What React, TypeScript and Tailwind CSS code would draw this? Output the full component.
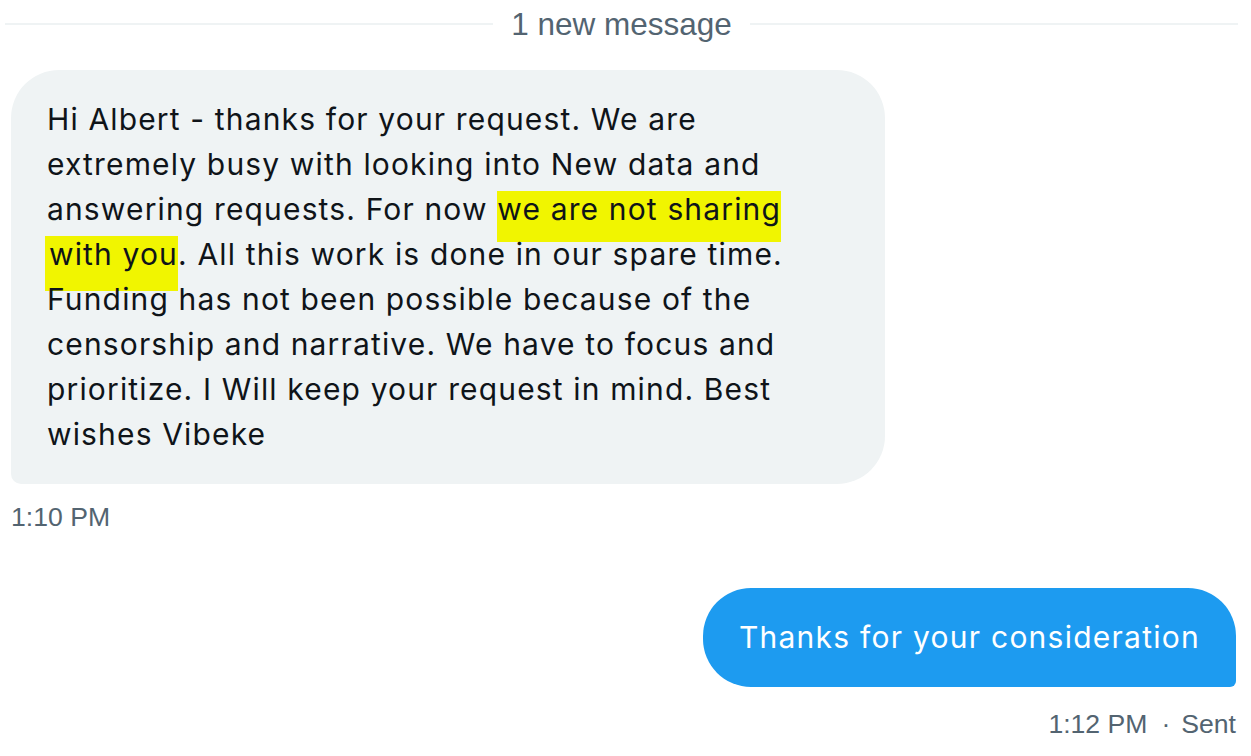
export default function App() {
  return (
    <div className="min-h-screen bg-white pl-[11px] pr-[15px]">
      {/* new-message divider */}
      <div className="flex h-[50px] items-center -ml-[6px] -mr-[2px]">
        <div className="h-[2px] flex-1 bg-[#eff3f4] -mt-[2px]" />
        <span className="px-[18px] text-[31.5px] leading-none text-[#536471] font-['Liberation_Sans',Arial,sans-serif]">
          1 new message
        </span>
        <div className="h-[2px] flex-1 bg-[#eff3f4] -mt-[2px]" />
      </div>

      {/* received */}
      <div className="mt-[20px] flex flex-col items-start">
        <div className="w-[874px] rounded-[48px] rounded-bl-[10px] bg-[#eff3f4] px-[36px] py-[27px] text-[30px] leading-[45px] tracking-[1.15px] text-[#0f1419] font-['Inter','Noto_Sans',sans-serif]">
          Hi Albert - thanks for your request. We are
          <br />
          extremely busy with looking into New data and
          <br />
          answering requests. For now{' '}
          <span className="bg-[#f1f500] pb-[15px]">we are not sharing</span>
          <br />
          <span className="bg-[#f1f500] pb-[19px] pl-[4px] -ml-[2px]">with you</span>. All this work is done in our spare time.
          <br />
          Funding has not been possible because of the
          <br />
          censorship and narrative. We have to focus and
          <br />
          prioritize. I Will keep your request in mind. Best
          <br />
          wishes Vibeke
        </div>
        <div className="mt-[17px] text-[26.6px] leading-[32px] text-[#536471] font-['Liberation_Sans',Arial,sans-serif]">
          1:10 PM
        </div>
      </div>

      {/* sent */}
      <div className="mt-[55px] flex flex-col items-end">
        <div className="rounded-[48px] rounded-br-[6px] bg-[#1d9bf0] px-[36px] py-[27px] text-[30px] leading-[45px] tracking-[1.25px] text-white font-['Inter','Noto_Sans',sans-serif]">
          Thanks for your consideration
        </div>
        <div className="mt-[21px] flex items-center text-[26.6px] leading-[32px] text-[#536471] font-['Liberation_Sans',Arial,sans-serif]">
          <span>1:12 PM</span>
          <span className="pl-[14px] pr-[11px]">·</span>
          <span>Sent</span>
        </div>
      </div>
    </div>
  );
}
